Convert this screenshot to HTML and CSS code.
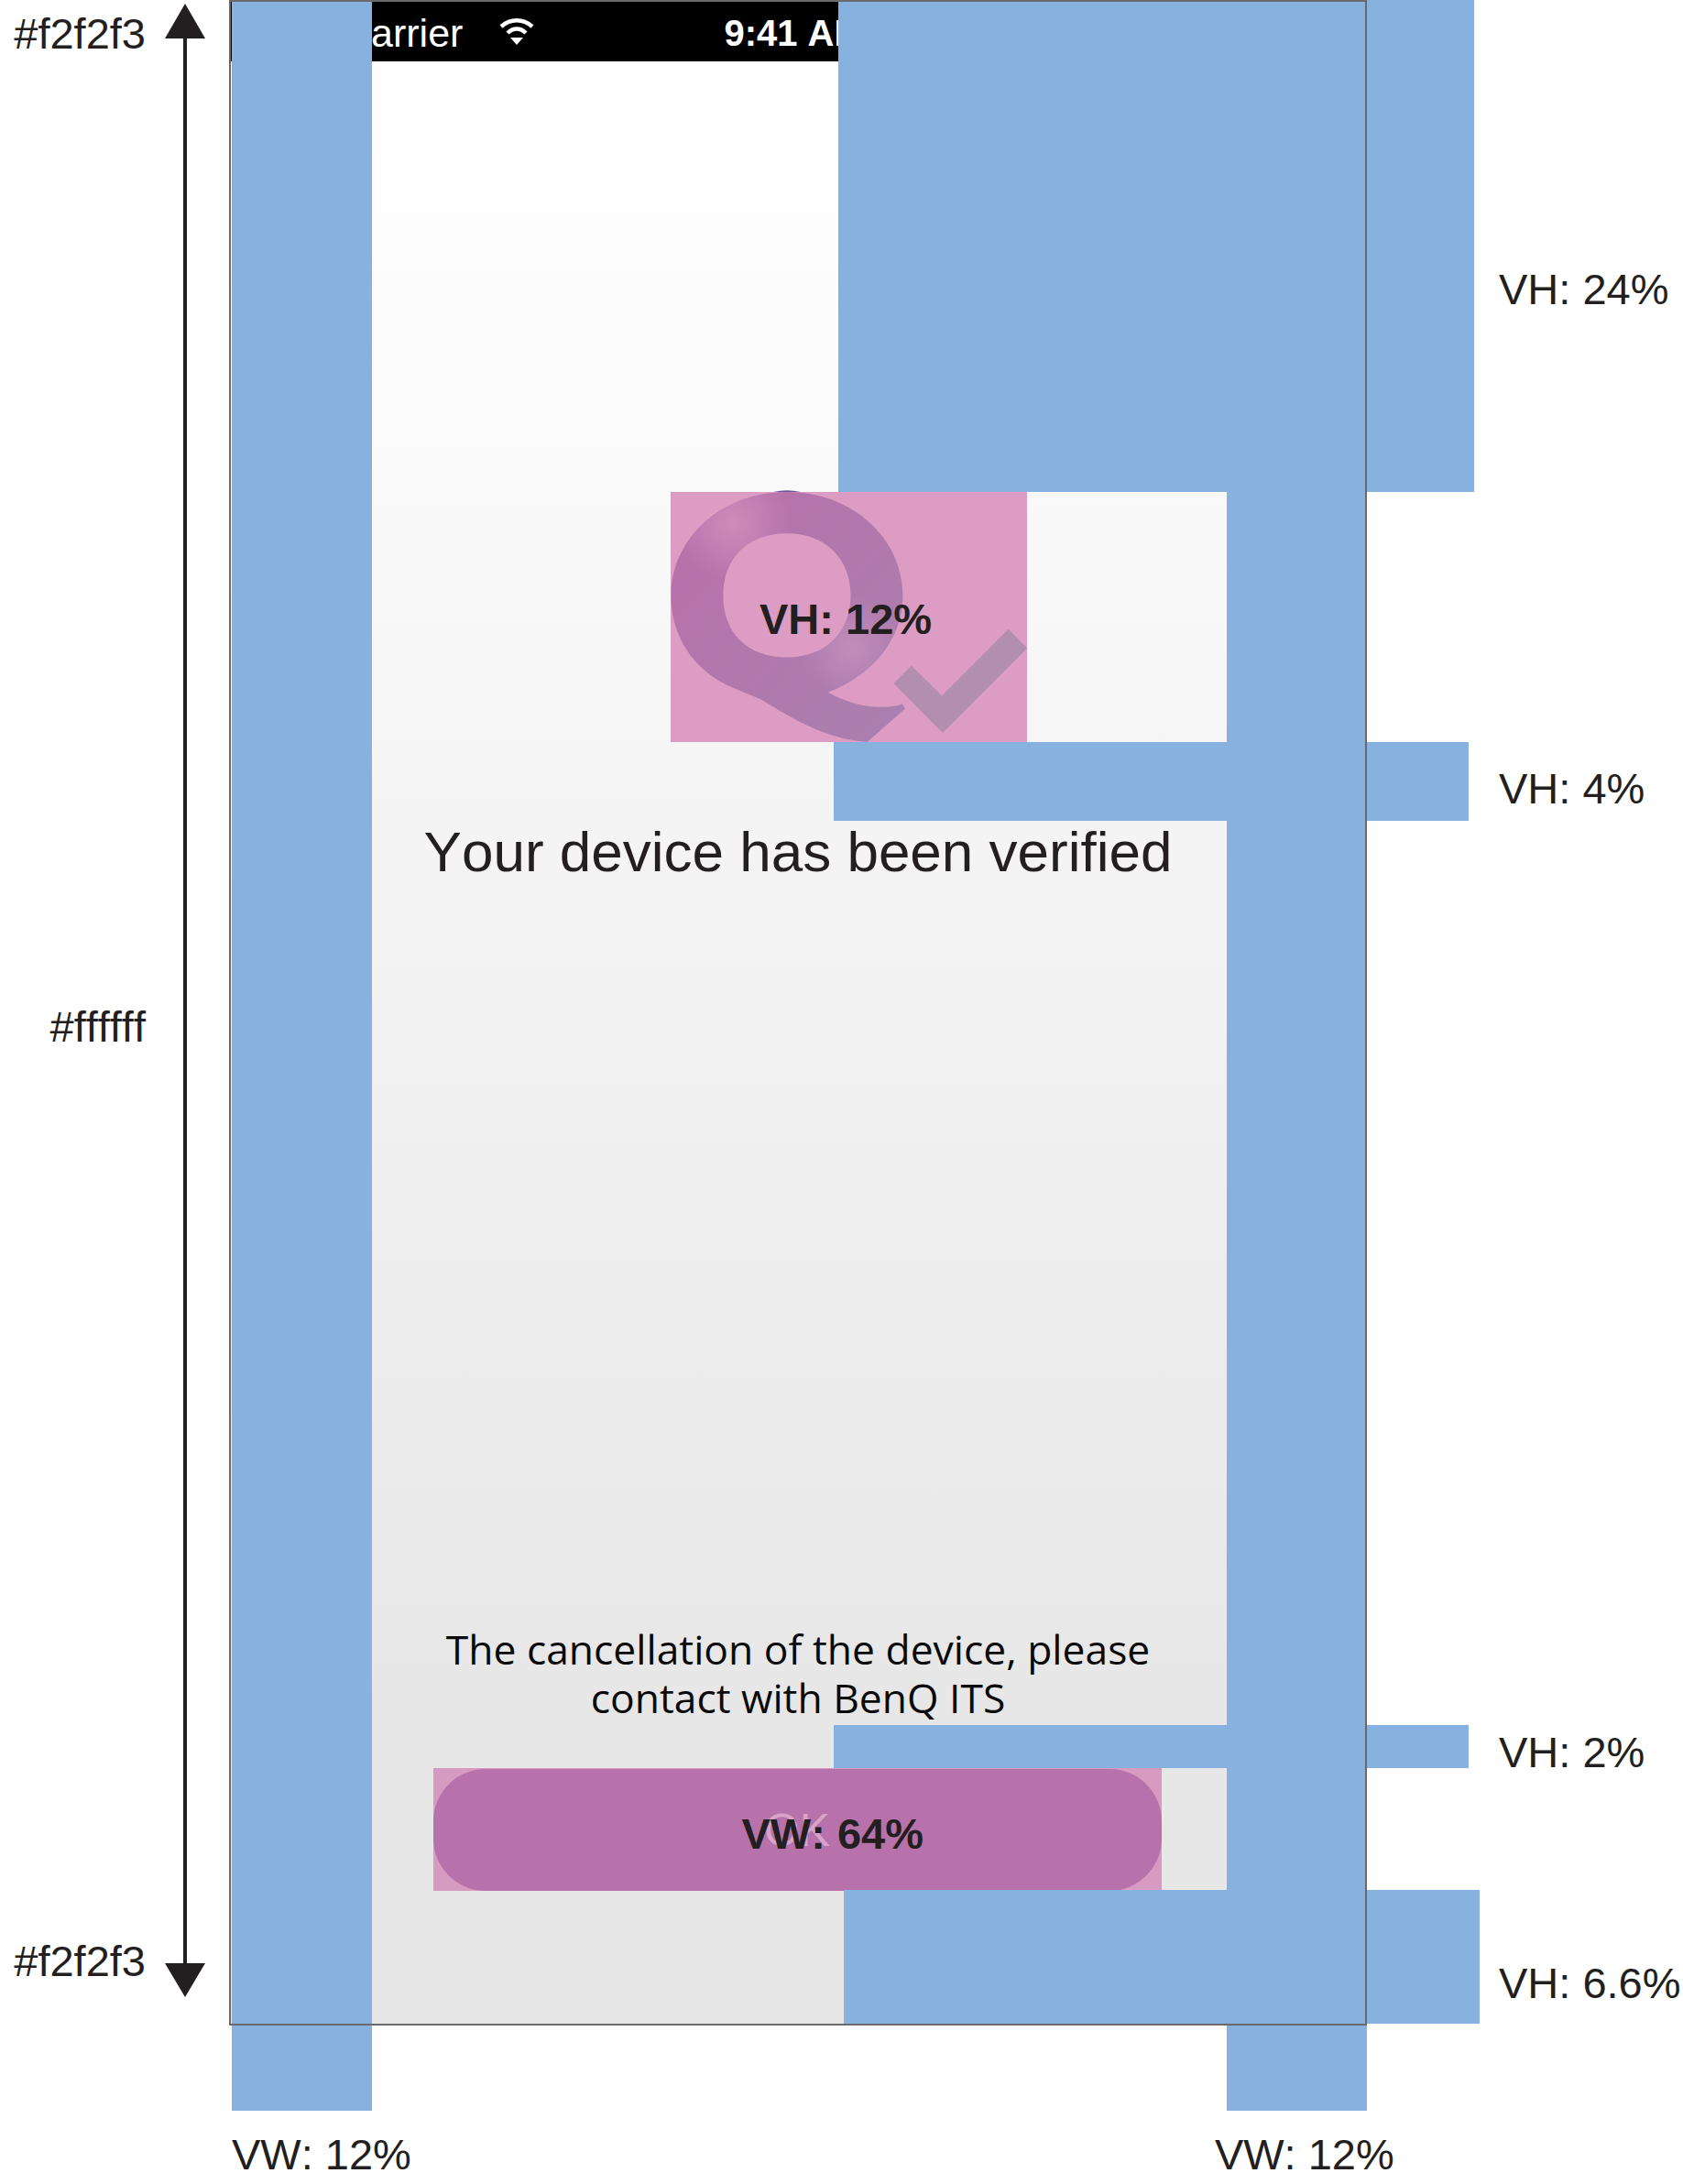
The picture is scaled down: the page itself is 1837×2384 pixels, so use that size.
FILE: index.html
```html
<!DOCTYPE html>
<html lang="en">
<head>
    <meta charset="UTF-8">
    <meta name="viewport" content="width=device-width, initial-scale=1.0">
    <title>Device verified spec</title>
    <link rel="stylesheet" href="styles.css">
</head>
<body>
    <div class="stage">
        <div class="top-row">
            <div class="rail">
                <div class="rail-labels">
                    <div class="note-label rail-first">#f2f2f3</div>
                    <div class="note-label rail-middle">#ffffff</div>
                    <div class="note-label rail-last">#f2f2f3</div>
                </div>
                <svg class="rail-arrow" viewBox="0 0 44 2211" width="44" height="2211">
                    <rect x="20" y="30" width="4" height="2120" fill="#231f20"/>
                    <polygon points="22,4 0,42 44,42" fill="#231f20"/>
                    <polygon points="0,2143 44,2143 22,2180" fill="#231f20"/>
                </svg>
            </div>

            <div class="phone">
                <div class="status-bar">
                    <span class="carrier">Carrier</span>
                    <svg class="wifi" viewBox="0 0 40 31" width="40" height="31">
                        <path d="M3 11 C13 2 27 2 37 11" fill="none" stroke="#fff" stroke-width="4.5"/>
                        <path d="M10 18 C16 12 24 12 30 18" fill="none" stroke="#fff" stroke-width="4.5"/>
                        <polygon points="13,23 27,23 20,31" fill="#fff"/>
                    </svg>
                    <span class="clock">9:41 AM</span>
                </div>
                <div class="content">
                    <div class="logo-box">
                        <svg class="logo" viewBox="97 80 1166 820" width="389" height="273">
                            <defs>
                                <linearGradient id="qBase" x1="0" y1="0" x2="1" y2="1">
                                    <stop offset="0" stop-color="#ba6fa9"/>
                                    <stop offset="1" stop-color="#a980af"/>
                                </linearGradient>
                                <radialGradient id="qGlowTop" gradientUnits="userSpaceOnUse" cx="300" cy="180" r="190">
                                    <stop offset="0" stop-color="#d08fbd" stop-opacity="0.9"/>
                                    <stop offset="1" stop-color="#d08fbd" stop-opacity="0"/>
                                </radialGradient>
                                <radialGradient id="qGlowLow" gradientUnits="userSpaceOnUse" cx="690" cy="590" r="170">
                                    <stop offset="0" stop-color="#c390bc" stop-opacity="0.9"/>
                                    <stop offset="1" stop-color="#c390bc" stop-opacity="0"/>
                                </radialGradient>
                                <path id="qShape" fill-rule="evenodd" d="M477 80 C690 80 857 230 857 420 C857 560 760 680 612 737 C680 775 770 800 855 776 L865 790 L740 900 C600 890 490 820 400 765 C370 748 340 740 320 730 C180 680 97 560 97 420 C97 230 265 80 477 80 Z M477 216 C345 216 268 300 268 420 C268 540 345 622 477 622 C605 622 686 540 686 420 C686 300 605 216 477 216 Z"/>
                            </defs>
                            <path d="M432 80 Q477 70 522 80 Z" fill="#6f55a0"/>
                            <use href="#qShape" fill="url(#qBase)"/>
                            <use href="#qShape" fill="url(#qGlowTop)"/>
                            <use href="#qShape" fill="url(#qGlowLow)"/>
                            <polygon points="827,708 885,650 985,748 1203,530 1265,592 988,870" fill="#b28fae"/>
                        </svg>
                        <span class="spec-inline">VH: 12%</span>
                    </div>
                    <h1 class="title">Your device has been verified</h1>
                    <p class="hint">The cancellation of the device, please<br>contact with BenQ ITS</p>
                    <div class="button-box">
                        <div class="ok-button">OK</div>
                        <span class="spec-inline spec-button">VW: 64%</span>
                    </div>
                </div>
            </div>

            <div class="right-labels">
                <div class="note-label right-24">VH: 24%</div>
                <div class="note-label right-4">VH: 4%</div>
                <div class="note-label right-2">VH: 2%</div>
                <div class="note-label right-66">VH: 6.6%</div>
            </div>
        </div>

        <div class="bottom-row">
            <div class="note-label">VW: 12%</div>
            <div class="note-label bottom-second">VW: 12%</div>
        </div>

        <!-- blue margin markers, they lie over the phone -->
        <div class="spec-block spec-left"></div>
        <div class="spec-block spec-right"></div>
        <div class="spec-block spec-top"></div>
        <div class="spec-block spec-gap4"></div>
        <div class="spec-block spec-gap2"></div>
        <div class="spec-block spec-foot"></div>
    </div>
</body>
</html>
```

FILE: styles.css
```css
body {
    margin: 0;
    background-color: #ffffff;
    color: #231f20;
    font-family: "Liberation Sans", Arial, sans-serif;
    font-kerning: none;
}

.stage {
    position: relative;
    width: 1837px;
    height: 2384px;
    overflow: hidden;
}

.top-row {
    display: flex;
    height: 2211px;
}

.note-label {
    font-size: 47px;
    line-height: 53px;
    white-space: nowrap;
}

/* left rail with the gradient arrow */
.rail {
    display: flex;
    width: 250px;
    flex-shrink: 0;
}

.rail-labels {
    width: 159px;
    text-align: right;
}

.rail-first {
    margin-top: 10px;
}

.rail-middle {
    margin-top: 1031px;
}

.rail-last {
    margin-top: 967px;
}

.rail-arrow {
    margin-left: 21px;
}

/* phone */
.phone {
    position: relative;
    display: flex;
    flex-direction: column;
    width: 1242px;
    height: 2211px;
    flex-shrink: 0;
    box-sizing: border-box;
}

.phone::after {
    content: "";
    position: absolute;
    inset: 0;
    z-index: 3;
    border: 2px solid #6a6a6c;
}

.status-bar {
    display: flex;
    align-items: center;
    height: 67px;
    box-sizing: border-box;
    padding: 5px 0 0 124px;
    background-color: #000000;
    color: #ffffff;
    flex-shrink: 0;
}

.carrier {
    font-size: 43px;
}

.wifi {
    margin: -5px 0 0 39px;
}

.clock {
    margin-left: 206px;
    font-size: 40px;
    font-weight: 700;
}

.content {
    display: flex;
    flex-direction: column;
    align-items: center;
    flex: 1;
    background: linear-gradient(#ffffff 3%, #e7e7e7 84%);
}

.logo-box {
    position: relative;
    display: flex;
    width: 389px;
    height: 273px;
    margin-top: 470px;
    margin-left: 111px;
    background-color: #dd9cc3;
}

.logo {
    overflow: visible;
}

.spec-inline {
    position: absolute;
    top: 112px;
    left: 97px;
    font-size: 47px;
    line-height: 53px;
    font-weight: 700;
    color: #231f20;
}

.title {
    margin: 86px 0 0;
    font-size: 62px;
    line-height: 68px;
    font-weight: 400;
    color: #231f20;
}

.hint {
    margin: auto 0 0;
    font-family: "Open Sans", sans-serif;
    font-size: 44.4px;
    line-height: 53px;
    text-align: center;
    color: #0a0a0a;
}

.button-box {
    position: relative;
    width: 795px;
    height: 134px;
    margin: 50px 2px 147px 0;
    background-color: #d79bc2;
}

.ok-button {
    display: flex;
    align-items: center;
    justify-content: center;
    height: 133px;
    margin-top: 1px;
    border-radius: 57px;
    background-color: #b872ab;
    color: #d9a3c8;
    font-size: 50px;
}

.spec-button {
    top: 45px;
    left: 337px;
}

/* right side labels */
.right-labels {
    padding-left: 144px;
}

.right-24 {
    margin-top: 289px;
}

.right-4 {
    margin-top: 492px;
}

.right-2 {
    margin-top: 999px;
}

.right-66 {
    margin-top: 199px;
}

.bottom-row {
    display: flex;
    padding: 114px 0 0 253px;
}

.bottom-second {
    margin-left: 877px;
}

/* blue markers */
.spec-block {
    position: absolute;
    z-index: 1;
    background-color: #87b2e0;
}

.spec-left {
    top: 0;
    left: 253px;
    width: 153px;
    height: 2304px;
}

.spec-right {
    top: 0;
    left: 1339px;
    width: 153px;
    height: 2304px;
}

.spec-top {
    top: 0;
    left: 915px;
    width: 694px;
    height: 537px;
}

.spec-gap4 {
    top: 810px;
    left: 910px;
    width: 693px;
    height: 86px;
}

.spec-gap2 {
    top: 1883px;
    left: 910px;
    width: 693px;
    height: 47px;
}

.spec-foot {
    top: 2063px;
    left: 921px;
    width: 694px;
    height: 146px;
}
```
